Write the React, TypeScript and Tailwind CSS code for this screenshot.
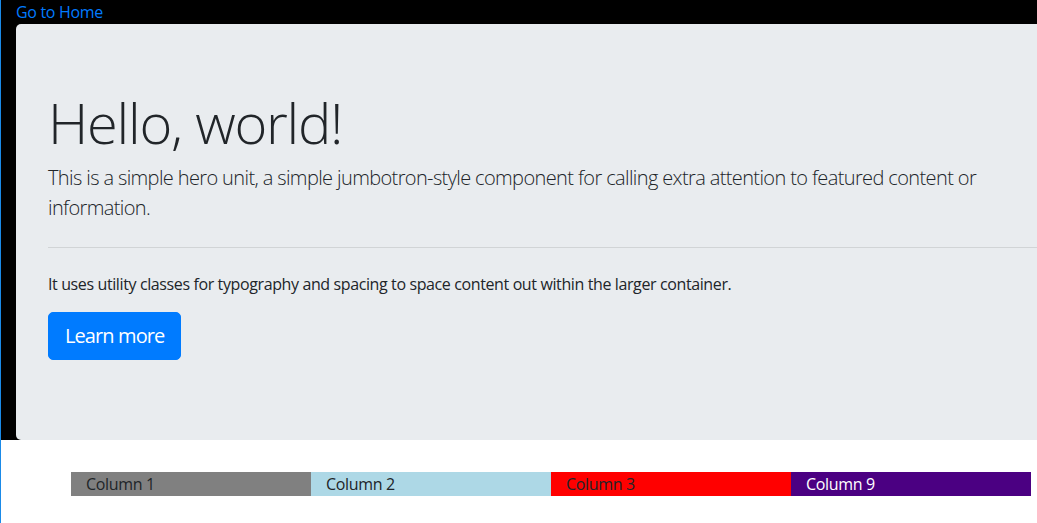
import React from "react";

const font = { fontFamily: '"Open Sans", "Noto Sans", sans-serif' };

export default function App() {
  return (
    <div
      className="min-h-[523px] w-[1037px] overflow-hidden border-l border-[#1a8ae8] bg-white tracking-[-0.02em] text-[#212529]"
      style={font}
    >
      <div className="bg-black pl-[15px]">
        <a href="#" className="block text-[16px] leading-[24px] text-[#007bff]">
          Go to Home
        </a>
        <div className="w-[1100px] rounded-[5px] bg-[#e9ecef] px-8 py-16">
          <h1 className="mb-2 pt-[2px] text-[56px] font-light leading-[65px] tracking-[-0.022em]">
            Hello, world!
          </h1>
          <p className="w-[980px] text-[20px] font-light leading-[30px] tracking-[-0.031em]">
            This is a simple hero unit, a simple jumbotron-style component for calling extra attention to featured content or information.
          </p>
          <hr className="my-6 border-0 border-t border-black/10" />
          <p className="mb-4 text-[16px] leading-[24px] tracking-[-0.024em]">
            It uses utility classes for typography and spacing to space content out within the larger container.
          </p>
          <p className="mb-4">
            <a
              href="#"
              className="inline-block rounded-[5px] border border-[#007bff] bg-[#007bff] px-4 py-2 text-[20px] leading-[30px] tracking-[-0.045em] text-white"
            >
              Learn more
            </a>
          </p>
        </div>
      </div>
      <div className="ml-[70px] mt-8 grid w-[960px] grid-cols-4 text-[16px] leading-[24px]">
        <div className="bg-[#808080] px-[15px]">Column 1</div>
        <div className="bg-[#add8e6] px-[15px]">Column 2</div>
        <div className="bg-[#ff0000] px-[15px]">Column 3</div>
        <div className="bg-[#4b0082] px-[15px] text-white">Column 9</div>
      </div>
    </div>
  );
}
